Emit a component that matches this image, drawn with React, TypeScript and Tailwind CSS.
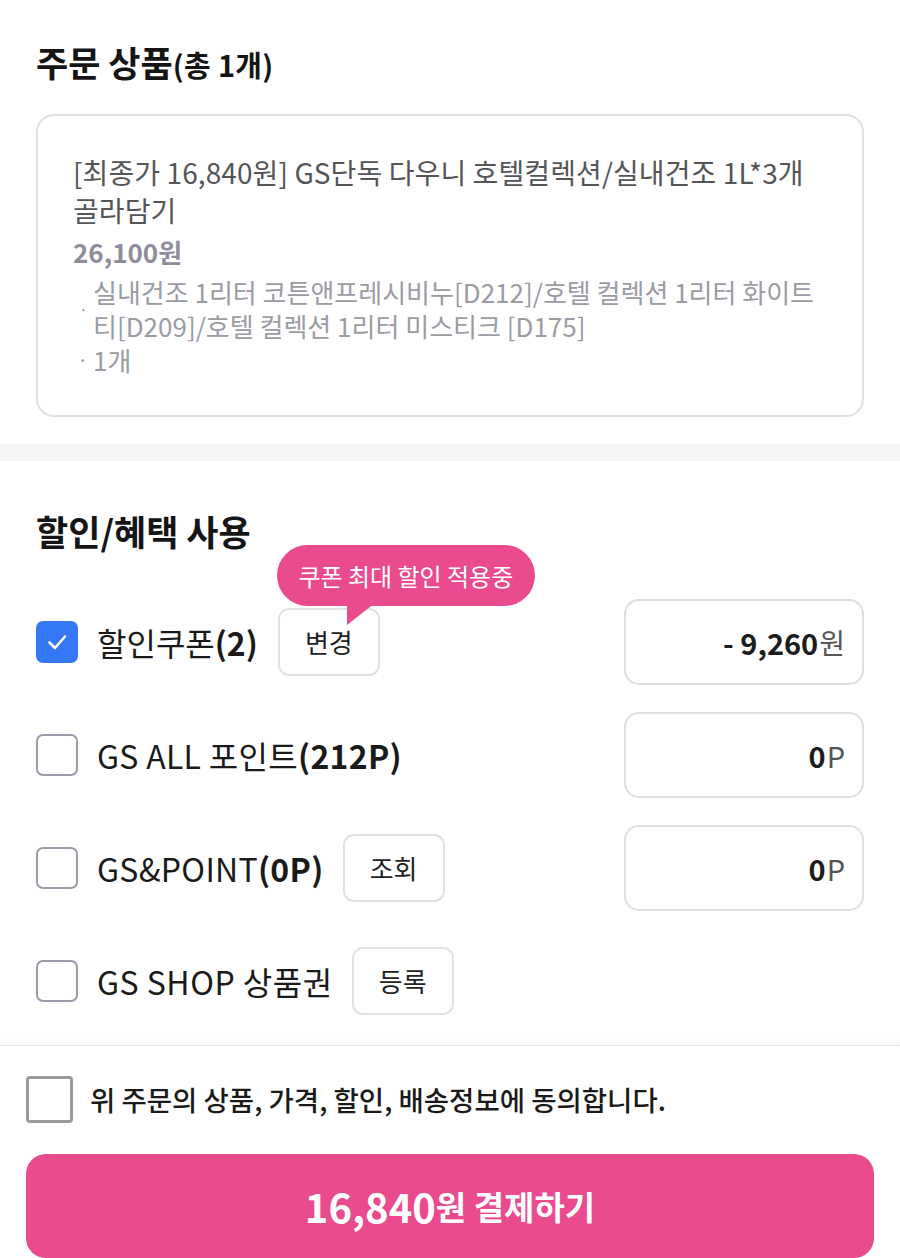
import React from "react";

const FONT = '"Noto Sans CJK KR", "Noto Sans", "Liberation Sans", sans-serif';

function CheckIcon() {
  return (
    <svg width="24" height="24" viewBox="0 0 24 24" fill="none">
      <path d="M4.5 12.5 L10 18 L20 6.5" stroke="white" strokeWidth="2.6" strokeLinecap="round" strokeLinejoin="round" />
    </svg>
  );
}

function Box({ checked }: { checked?: boolean }) {
  if (checked) {
    return (
      <div className="w-[42px] h-[42px] shrink-0 rounded-[7px] bg-[#3478f6] flex items-center justify-center">
        <CheckIcon />
      </div>
    );
  }
  return <div className="w-[42px] h-[42px] shrink-0 rounded-[7px] border-[2.5px] border-[#9b9aa8] bg-white" />;
}

function SmallBtn({ children }: { children: React.ReactNode }) {
  return (
    <div className="w-[102px] h-[68px] shrink-0 rounded-[11px] border-2 border-[#e2e2e6] bg-white flex items-center justify-center text-[26px] leading-none text-[#222]">
      {children}
    </div>
  );
}

function ValueBox({ children }: { children: React.ReactNode }) {
  return (
    <div className="ml-auto w-[240px] h-[86px] shrink-0 rounded-[15px] border-2 border-[#dedee4] bg-white flex items-center justify-end pr-[17px]">
      {children}
    </div>
  );
}

export default function App() {
  return (
    <div className="w-[900px] bg-white text-[#111]" style={{ fontFamily: FONT }}>
      {/* Section 1 */}
      <div className="px-9 pt-[40px]">
        <h2 className="text-[35px] leading-[44px] font-bold text-[#151515]">
          주문 상품<span className="text-[29px] leading-[44px] tracking-[0.3px]">(총 1개)</span>
        </h2>
        <div className="mt-[28px] rounded-[18px] border-2 border-[#e1e1e5] pl-[35px] pr-[20px] pt-[37px] pb-[38px]">
          <p className="text-[28px] leading-[38px] text-[#555558] tracking-[0.1px]">
            [최종가 16,840원] GS단독 다우니 호텔컬렉션/실내건조 1L*3개
            <br />
            골라담기
          </p>
          <p className="mt-[4px] text-[26px] leading-[38px] font-bold text-[#8e8d9c]">26,100원</p>
          <div className="mt-[4px] flex items-center text-[26px] leading-[34px] text-[#9b9ba3]">
            <span className="w-[20px] shrink-0 pl-[6px] text-[16px]">·</span>
            <span className="whitespace-nowrap">
              실내건조 1리터 코튼앤프레시비누[D212]/호텔 컬렉션 1리터 화이트
              <br />
              티[D209]/호텔 컬렉션 1리터 미스티크 [D175]
            </span>
          </div>
          <div className="flex items-center text-[26px] leading-[34px] text-[#9b9ba3]">
            <span className="w-[20px] shrink-0 pl-[4px] text-[20px]">·</span>
            <span>1개</span>
          </div>
        </div>
      </div>

      {/* Separator */}
      <div className="mt-[27px] h-[17px] bg-[#f6f6f8]" />

      {/* Section 2 */}
      <div className="px-9 pt-[48px]">
        <h2 className="text-[35px] leading-[44px] font-bold text-[#151515]">할인/혜택 사용</h2>
        <div className="mt-[46px] flex flex-col gap-[27px]">
          <div className="flex items-center h-[86px]">
            <Box checked />
            <span className="ml-[19px] text-[32px] leading-none text-[#1a1a1a]">
              할인쿠폰<span className="font-bold">(2)</span>
            </span>
            <div className="relative ml-[20px]">
              <SmallBtn>변경</SmallBtn>
              <div className="absolute left-[-1px] bottom-[70px] z-10">
                <div className="h-[61px] w-[258px] rounded-full bg-[#ea4a8e] flex items-center justify-center text-[24px] leading-none text-white whitespace-nowrap">
                  쿠폰 최대 할인 적용중
                </div>
                <svg className="absolute left-[70px] top-[58px]" width="28" height="24" viewBox="0 0 28 24">
                  <polygon points="0,0 28,0 0,22" fill="#ea4a8e" />
                </svg>
              </div>
            </div>
            <ValueBox>
              <span className="text-[29px] leading-none font-bold text-[#1c1c1c]">- 9,260</span>
              <span className="ml-[1px] text-[28px] leading-none text-[#555]">원</span>
            </ValueBox>
          </div>

          <div className="flex items-center h-[86px]">
            <Box />
            <span className="ml-[19px] text-[32px] leading-none text-[#1a1a1a] tracking-[0.3px]">
              GS ALL 포인트<span className="font-bold">(212P)</span>
            </span>
            <ValueBox>
              <span className="text-[29px] leading-none font-bold text-[#1c1c1c]">0</span>
              <span className="ml-[1px] text-[29px] leading-none text-[#555]">P</span>
            </ValueBox>
          </div>

          <div className="flex items-center h-[86px]">
            <Box />
            <span className="ml-[19px] text-[32px] leading-none text-[#1a1a1a] tracking-[0.3px]">
              GS&amp;POINT<span className="font-bold">(0P)</span>
            </span>
            <div className="ml-[19px]">
              <SmallBtn>조회</SmallBtn>
            </div>
            <ValueBox>
              <span className="text-[29px] leading-none font-bold text-[#1c1c1c]">0</span>
              <span className="ml-[1px] text-[29px] leading-none text-[#555]">P</span>
            </ValueBox>
          </div>

          <div className="flex items-center h-[86px]">
            <Box />
            <span className="ml-[19px] text-[32px] leading-none text-[#1a1a1a] tracking-[0.5px]">GS SHOP 상품권</span>
            <div className="ml-[19px]">
              <SmallBtn>등록</SmallBtn>
            </div>
          </div>
        </div>
      </div>

      {/* Bottom bar */}
      <div className="mt-[21px] border-t border-[#e4e4e6] shadow-[0_-2px_6px_rgba(0,0,0,0.04)] px-[26px] pt-[30px]">
        <div className="flex items-center h-[47px]">
          <div className="w-[47px] h-[47px] shrink-0 rounded-[4px] border-[3px] border-[#9a9a9a] bg-white" />
          <span className="ml-[17px] text-[27.5px] leading-none font-medium text-[#1a1a1a]">
            위 주문의 상품, 가격, 할인, 배송정보에 동의합니다.
          </span>
        </div>
        <div className="mt-[31px] h-[104px] rounded-[20px] bg-[#ea4a8e] flex items-center justify-center text-white font-bold">
          <span className="text-[40px] leading-none">16,840</span>
          <span className="text-[33px] leading-none">원 결제하기</span>
        </div>
      </div>
    </div>
  );
}
